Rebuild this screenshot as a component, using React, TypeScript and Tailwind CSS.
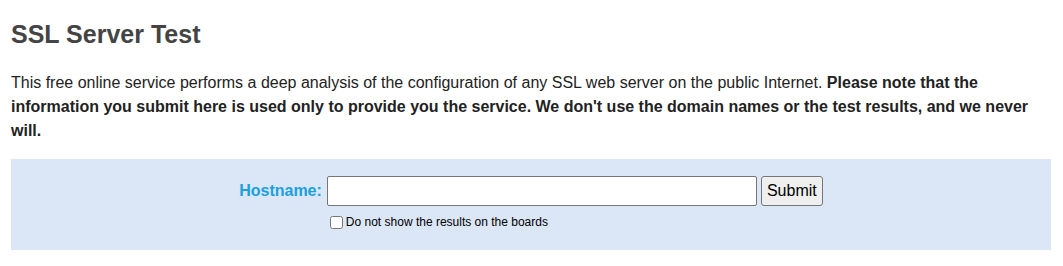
export default function App() {
  return (
    <div className="min-h-screen bg-white px-[11px] pt-[20px] font-['Liberation_Sans',Arial,sans-serif] text-[#222]">
      <h1 className="text-[25px] leading-[28px] font-bold text-[#444]">SSL Server Test</h1>

      <p className="mt-[23px] text-[16px] leading-[24px]">
        This free online service performs a deep analysis of the configuration of any SSL web server on the public
        Internet.{' '}
        <b>
          Please note that the information you submit here is used only to provide you the service. We don't use the
          domain names or the test results, and we never will.
        </b>
      </p>

      <div className="mt-[16px] w-[1040px] h-[91px] bg-[#dbe6f6] pt-[17px]">
        <div className="grid grid-cols-[auto_auto] justify-center gap-x-[5px]">
          <label className="self-center text-[16px] font-bold text-[#1a9fdf]">Hostname:</label>
          <div className="flex gap-[4px]">
            <input
              type="text"
              className="w-[430px] h-[30px] bg-white border border-[#767676] rounded-[2px] px-[4px] text-[14px] outline-none"
            />
            <button className="h-[30px] w-[62px] bg-[#efefef] border border-[#767676] rounded-[3px] text-[16px] text-black">
              Submit
            </button>
          </div>
          <div />
          <label className="mt-[7px] flex items-center text-[12px] text-black">
            <input type="checkbox" className="ml-[3px] mr-[3px] w-[13px] h-[13px]" />
            Do not show the results on the boards
          </label>
        </div>
      </div>
    </div>
  );
}
